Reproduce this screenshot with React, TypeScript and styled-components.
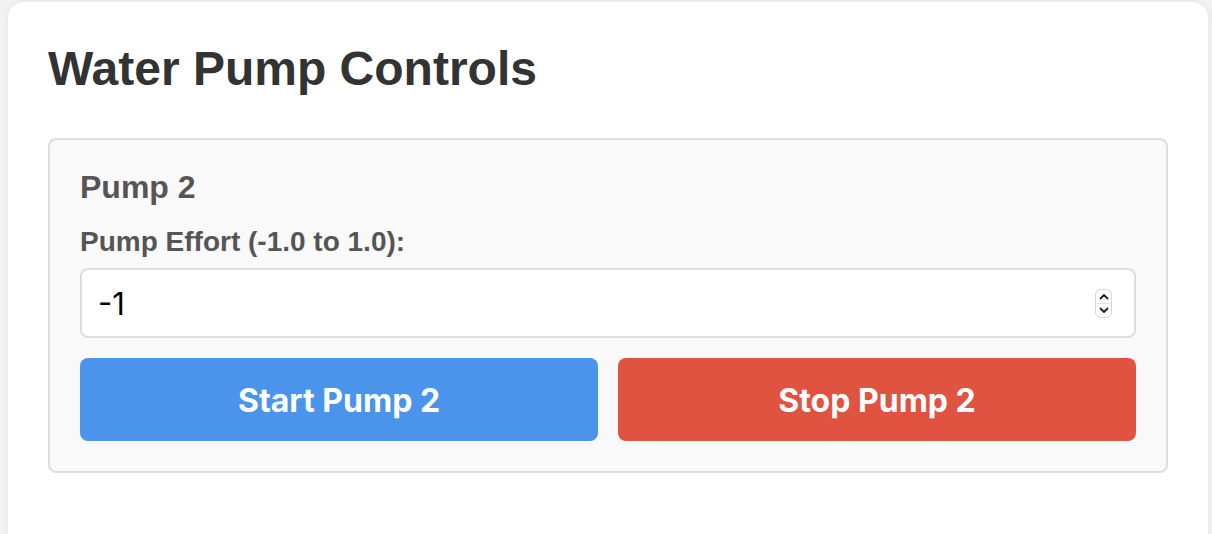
import React, { useState } from 'react'
import styled, { createGlobalStyle } from 'styled-components'

const GlobalStyle = createGlobalStyle`
  html, body {
    margin: 0;
    padding: 0;
    background: #f2f2f2;
    font-family: "Liberation Sans", Arial, sans-serif;
  }
`

const Page = styled.div`
  padding: 2px 4px 0 8px;
  height: 532px;
  overflow: hidden;
`

const Card = styled.div`
  background: #ffffff;
  border-radius: 16px;
  box-shadow: 0 0 8px rgba(0, 0, 0, 0.06);
  padding: 39px 40px 80px;
  min-height: 600px;
`

const Title = styled.h1`
  margin: 0 0 41px;
  color: #333333;
  font-size: 48px;
  line-height: 56px;
  font-weight: 700;
`

const Panel = styled.div`
  background: #f9f9f9;
  border: 2px solid #dddddd;
  border-radius: 8px;
  padding: 30px;
  display: flex;
  flex-direction: column;
`

const PumpName = styled.h3`
  margin: 1px 0 25px;
  color: #555555;
  font-size: 32px;
  line-height: 32px;
  font-weight: 700;
`

const Label = styled.label`
  display: block;
  color: #555555;
  font-size: 28px;
  line-height: 28px;
  font-weight: 700;
  margin-bottom: 12px;
`

const InputWrap = styled.div`
  position: relative;
`

const NumberInput = styled.input`
  box-sizing: border-box;
  width: 100%;
  height: 70px;
  border: 2px solid #dddddd;
  border-radius: 8px;
  background: #ffffff;
  padding: 0 60px 0 16px;
  font-family: Inter, "Liberation Sans", sans-serif;
  font-size: 31px;
  color: #000000;
  outline: none;
  appearance: textfield;
  -moz-appearance: textfield;

  &::-webkit-outer-spin-button,
  &::-webkit-inner-spin-button {
    -webkit-appearance: none;
    margin: 0;
  }
`

const Spinner = styled.div`
  position: absolute;
  right: 24px;
  top: 21px;
  width: 17px;
  height: 29px;
  box-sizing: border-box;
  border: 1px solid #d6d6d6;
  border-radius: 6px;
  background: #ffffff;
  display: flex;
  flex-direction: column;
  overflow: hidden;
`

const SpinHalf = styled.div<{ $bottom?: boolean }>`
  flex: 1;
  display: flex;
  align-items: center;
  justify-content: center;
  border-top: ${p => (p.$bottom ? '1px solid #e2e2e2' : 'none')};
`

const Buttons = styled.div`
  display: grid;
  grid-template-columns: 1fr 1fr;
  gap: 20px;
  margin-top: 20px;
`

const ActionButton = styled.button<{ $tone: 'start' | 'stop' }>`
  height: 83px;
  border: none;
  border-radius: 8px;
  background: ${p => (p.$tone === 'start' ? '#4a95eb' : '#e15341')};
  color: #ffffff;
  font-family: Inter, "Liberation Sans", sans-serif;
  font-size: 32px;
  font-weight: 700;
  padding-top: 2px;
  cursor: pointer;
`

const Chevron: React.FC<{ up?: boolean }> = ({ up }) => (
  <svg width="10" height="7" viewBox="0 0 10 7">
    <path
      d={up ? 'M1.5 5.5 L5 2 L8.5 5.5' : 'M1.5 1.5 L5 5 L8.5 1.5'}
      fill="none"
      stroke="#222"
      strokeWidth="1.8"
      strokeLinecap="round"
      strokeLinejoin="round"
    />
  </svg>
)

const App: React.FC = () => {
  const [effort, setEffort] = useState('-1')

  return (
    <Page>
      <GlobalStyle />
      <Card>
        <Title>Water Pump Controls</Title>
        <Panel>
          <PumpName>Pump 2</PumpName>
          <Label htmlFor="effort-2">Pump Effort (-1.0 to 1.0):</Label>
          <InputWrap>
            <NumberInput
              id="effort-2"
              type="number"
              min={-1}
              max={1}
              step={0.1}
              value={effort}
              onChange={e => setEffort(e.target.value)}
            />
            <Spinner>
              <SpinHalf><Chevron up /></SpinHalf>
              <SpinHalf $bottom><Chevron /></SpinHalf>
            </Spinner>
          </InputWrap>
          <Buttons>
            <ActionButton $tone="start">Start Pump 2</ActionButton>
            <ActionButton $tone="stop">Stop Pump 2</ActionButton>
          </Buttons>
        </Panel>
      </Card>
    </Page>
  )
}

export default App
